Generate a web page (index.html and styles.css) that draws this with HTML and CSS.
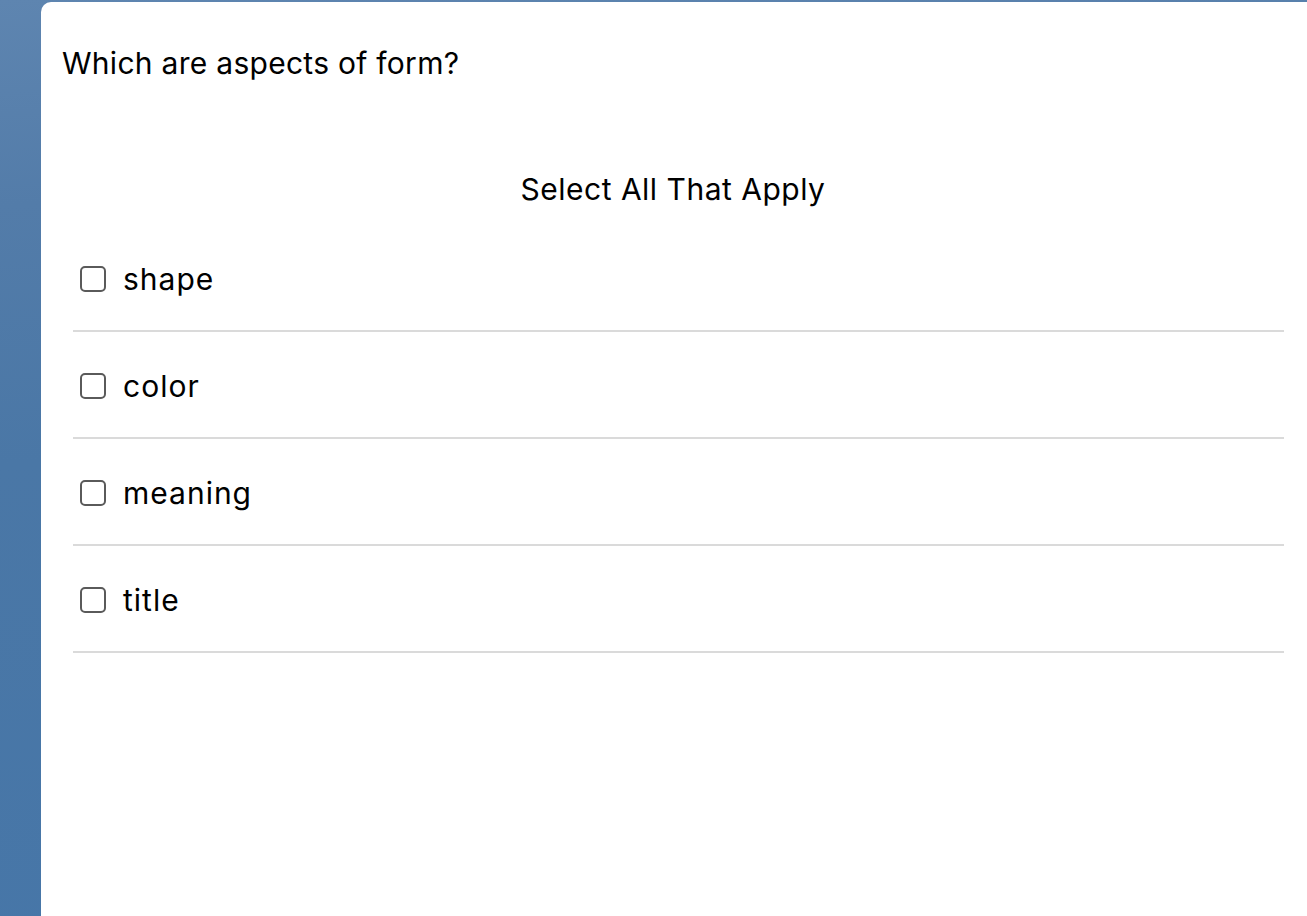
FILE: index.html
```html
<!DOCTYPE html>
<html>
<head>
<meta charset="utf-8">
<link rel="stylesheet" href="styles.css">
</head>
<body>
<div class="card">
  <h1 class="question">Which are aspects of form?</h1>
  <h2 class="instruction">Select All That Apply</h2>
  <ul class="options">
    <li class="option"><span class="box"></span><span class="label">shape</span></li>
    <li class="option"><span class="box"></span><span class="label">color</span></li>
    <li class="option"><span class="box"></span><span class="label">meaning</span></li>
    <li class="option"><span class="box"></span><span class="label">title</span></li>
  </ul>
</div>
</body>
</html>
```
FILE: styles.css
```css
html, body {
  margin: 0;
  padding: 0;
  height: 100%;
  overflow: hidden;
}
body {
  background: linear-gradient(175deg, #5e85b0 0%, #537ca9 20%, #4a77a6 45%, #4676a8 100%);
  font-family: Inter, "Liberation Sans", Arial, sans-serif;
  color: #000;
}
.card {
  margin: 2px 0 0 41px;
  height: 914px;
  background: #fff;
  border-top-left-radius: 10px;
  padding: 43px 23px 0 21px;
  box-sizing: border-box;
}
.question {
  margin: 0;
  font-size: 30px;
  font-weight: normal;
  line-height: 36px;
  letter-spacing: 0.28px;
}
.instruction {
  margin: 90px 0 0 0;
  font-size: 30px;
  font-weight: normal;
  line-height: 36px;
  letter-spacing: 0.5px;
  text-align: center;
}
.options {
  list-style: none;
  margin: 18px 0 0 11px;
  padding: 0;
}
.option {
  display: flex;
  align-items: center;
  height: 107px;
  box-sizing: border-box;
  border-bottom: 2px solid #dadada;
  padding: 3px 0 0 7px;
}
.box {
  width: 26px;
  height: 26px;
  box-sizing: border-box;
  border: 2px solid #5a5a5a;
  border-radius: 5px;
  flex: none;
}
.label {
  margin-left: 17px;
  font-size: 30px;
  line-height: 36px;
  letter-spacing: 1px;
}
```
